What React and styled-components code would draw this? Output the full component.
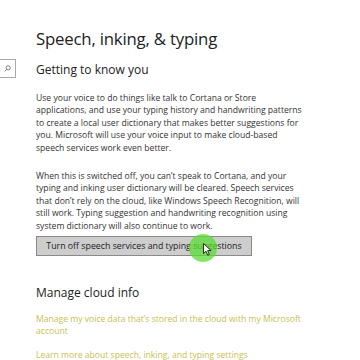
import React from "react";
import styled, { createGlobalStyle } from "styled-components";

const Global = createGlobalStyle`
  html, body { margin: 0; padding: 0; background: #fff; }
  body { width: 360px; height: 360px; overflow: hidden; font-family: "Open Sans", "Noto Sans", sans-serif; }
`;

const Page = styled.div`
  position: relative;
  width: 360px;
  height: 360px;
  background: #fff;
  overflow: hidden;
  display: flex;
`;

const Sidebar = styled.div`
  width: 36px;
  flex-shrink: 0;
  padding-top: 59px;
`;

const SearchBox = styled.div`
  width: 20px;
  height: 17px;
  margin-left: -10px;
  border: 1px solid #a8a8a8;
  display: flex;
  align-items: center;
  justify-content: flex-end;
  padding-right: 4px;
  color: #555;
`;

const Content = styled.div`
  display: flex;
  flex-direction: column;
  padding-top: 27px;
  color: #2b2b2b;
`;

const Title = styled.h1`
  margin: 0;
  font-size: 16.8px;
  font-weight: 400;
  line-height: 24px;
  color: #222;
  letter-spacing: -0.2px;
`;

const Subhead = styled.h2`
  margin: ${p => p.$mt || 0}px 0 0;
  font-size: 12px;
  font-weight: 400;
  line-height: 18px;
  color: #222;
`;

const Para = styled.p`
  margin: ${p => p.$mt}px 0 0;
  font-size: 8.6px;
  line-height: 12.4px;
  color: #333;
  white-space: nowrap;
`;

const ButtonWrap = styled.div`
  position: relative;
  margin-top: 4px;
  align-self: flex-start;
`;

const Button = styled.button`
  width: 216px;
  height: 20px;
  background: #cdcdcd;
  border: 1px solid #8a8a8a;
  font-family: inherit;
  font-size: 8.8px;
  color: #222;
  padding: 0;
  display: flex;
  align-items: center;
  justify-content: center;
`;

const Highlight = styled.div`
  position: absolute;
  left: 153px;
  top: -2px;
  width: 28px;
  height: 28px;
  border-radius: 50%;
  background: rgba(90, 220, 50, 0.75);
  pointer-events: none;
`;

const Cursor = styled.svg`
  position: absolute;
  left: 167px;
  top: 7px;
  pointer-events: none;
`;

const Link = styled.a`
  display: block;
  margin-top: ${p => p.$mt}px;
  font-size: 8.6px;
  line-height: 12.4px;
  color: #c8c052;
  text-decoration: none;
  white-space: nowrap;
`;

export default function App() {
  return (
    <>
      <Global />
      <Page>
        <Sidebar>
          <SearchBox>
            <svg width="7" height="7" viewBox="0 0 10 10">
              <circle cx="6" cy="4" r="3" fill="none" stroke="#666" strokeWidth="1.2" />
              <line x1="3.8" y1="6.2" x2="1" y2="9" stroke="#666" strokeWidth="1.2" />
            </svg>
          </SearchBox>
        </Sidebar>
        <Content>
          <Title>Speech, inking, &amp; typing</Title>
          <Subhead $mt={10}>Getting to know you</Subhead>
          <Para $mt={13}>
            Use your voice to do things like talk to Cortana or Store<br />
            applications, and use your typing history and handwriting patterns<br />
            to create a local user dictionary that makes better suggestions for<br />
            you. Microsoft will use your voice input to make cloud-based<br />
            speech services work even better.
          </Para>
          <Para $mt={16}>
            When this is switched off, you can’t speak to Cortana, and your<br />
            typing and inking user dictionary will be cleared. Speech services<br />
            that don’t rely on the cloud, like Windows Speech Recognition, will<br />
            still work. Typing suggestion and handwriting recognition using<br />
            system dictionary will also continue to work.
          </Para>
          <ButtonWrap>
            <Button>Turn off speech services and typing suggestions</Button>
            <Highlight />
            <Cursor width="9" height="13" viewBox="0 0 9 13">
              <path d="M0.5 0.5 L0.5 10.5 L3 8.2 L4.8 12.2 L6.3 11.5 L4.6 7.6 L8 7.6 Z" fill="#fff" stroke="#000" strokeWidth="0.8" />
            </Cursor>
          </ButtonWrap>
          <Subhead $mt={28}>Manage cloud info</Subhead>
          <Link $mt={11}>
            Manage my voice data that’s stored in the cloud with my Microsoft<br />
            account
          </Link>
          <Link $mt={11}>Learn more about speech, inking, and typing settings</Link>
        </Content>
      </Page>
    </>
  );
}
